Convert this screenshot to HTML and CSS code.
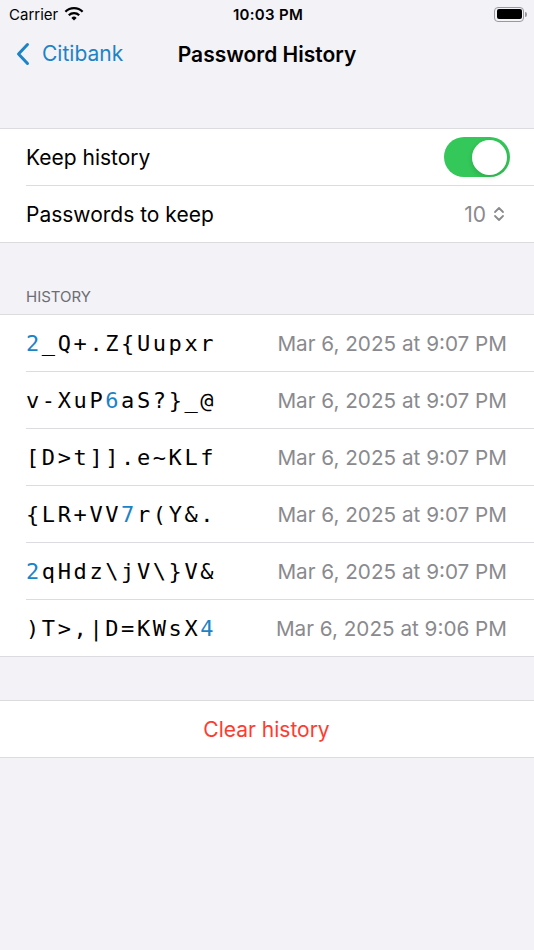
FILE: index.html
```html
<!DOCTYPE html>
<html lang="en">
<head>
  <meta charset="UTF-8" />
  <meta name="viewport" content="width=device-width, initial-scale=1.0"/>
  <title>Password History</title>
  <link rel="stylesheet" href="styles.css">
</head>
<body>

  <div class="status-bar">
    <div class="status-left">
      <span>Carrier</span>
      <svg class="wifi" viewBox="0 0 20 14">
        <path d="M10 13.6 L7.4 10.9 A3.7 3.7 0 0 1 12.6 10.9 Z" />
        <path d="M5.6 9.1 L4 7.4 A8.5 8.5 0 0 1 16 7.4 L14.4 9.1 A6.2 6.2 0 0 0 5.6 9.1 Z" />
        <path d="M2.2 5.6 L0.6 3.9 A13.3 13.3 0 0 1 19.4 3.9 L17.8 5.6 A11 11 0 0 0 2.2 5.6 Z" />
      </svg>
    </div>
    <div class="status-time">10:03 PM</div>
    <div class="status-right">
      <div class="battery"><div class="battery-fill"></div></div>
      <div class="battery-nub"></div>
    </div>
  </div>

  <header class="nav-bar">
    <a href="#" class="nav-back">
      <svg viewBox="0 0 14 24">
        <polyline points="11.5 2.5 2.5 12 11.5 21.5" />
      </svg>
      Citibank
    </a>
    <h1 class="nav-title">Password History</h1>
  </header>

  <section class="group group-settings">
    <div class="row">
      <span class="row-label">Keep history</span>
      <div class="toggle"><div class="toggle-knob"></div></div>
    </div>
    <div class="row">
      <span class="row-label">Passwords to keep</span>
      <span class="stepper">
        10
        <svg viewBox="0 0 12 16">
          <polyline points="2 6 6 2 10 6" />
          <polyline points="2 10 6 14 10 10" />
        </svg>
      </span>
    </div>
  </section>

  <div class="group-header">History</div>
  <section class="group">
    <div class="row">
      <span class="pw"><span class="digit">2</span>_Q+.Z{Uupxr</span>
      <span class="date">Mar 6, 2025 at 9:07 PM</span>
    </div>
    <div class="row">
      <span class="pw">v-XuP<span class="digit">6</span>aS?}_@</span>
      <span class="date">Mar 6, 2025 at 9:07 PM</span>
    </div>
    <div class="row">
      <span class="pw">[D&gt;t]].e~KLf</span>
      <span class="date">Mar 6, 2025 at 9:07 PM</span>
    </div>
    <div class="row">
      <span class="pw">{LR+VV<span class="digit">7</span>r(Y&amp;.</span>
      <span class="date">Mar 6, 2025 at 9:07 PM</span>
    </div>
    <div class="row">
      <span class="pw"><span class="digit">2</span>qHdz\jV\}V&amp;</span>
      <span class="date">Mar 6, 2025 at 9:07 PM</span>
    </div>
    <div class="row">
      <span class="pw">)T&gt;,|D=KWsX<span class="digit">4</span></span>
      <span class="date">Mar 6, 2025 at 9:06 PM</span>
    </div>
  </section>

  <section class="group group-clear">
    <div class="row row-center">
      <a href="#" class="btn-clear">Clear history</a>
    </div>
  </section>

</body>
</html>
```

FILE: styles.css
```css
:root {
  --blue: #1c83c6;
  --grey: #8a8a8e;
  --line: #dcdce0;
  --bg: #f2f2f7;
}

body {
  font-family: Inter, 'Noto Sans', Arial, sans-serif;
  background: var(--bg);
  margin: 0;
  color: #000;
  min-height: 100vh;
}

.status-bar {
  height: 28px;
  display: flex;
  align-items: center;
  justify-content: space-between;
  padding: 0 7px 0 9px;
  font-size: 15px;
}

.status-left {
  display: flex;
  align-items: center;
  gap: 6px;
  width: 120px;
}

.wifi {
  width: 20px;
  height: 14px;
  fill: #000;
}

.status-time {
  font-weight: 600;
  letter-spacing: 0.3px;
}

.status-right {
  display: flex;
  align-items: center;
  justify-content: flex-end;
  width: 120px;
}

.battery {
  width: 25px;
  height: 10px;
  border: 1.5px solid #9a9a9e;
  border-radius: 4px;
  padding: 1.5px;
}

.battery-fill {
  width: 100%;
  height: 100%;
  background: #000;
  border-radius: 2px;
}

.battery-nub {
  width: 2px;
  height: 5px;
  margin-left: 1px;
  background: #9a9a9e;
  border-radius: 0 2px 2px 0;
}

.nav-bar {
  height: 52px;
  display: flex;
  align-items: center;
  justify-content: center;
  position: relative;
  margin-bottom: 48px;
}

.nav-back {
  position: absolute;
  left: 16px;
  top: 13px;
  display: flex;
  align-items: center;
  gap: 12px;
  color: var(--blue);
  text-decoration: none;
  font-size: 21px;
}

.nav-back svg {
  width: 14px;
  height: 24px;
  fill: none;
  stroke: var(--blue);
  stroke-width: 3;
  stroke-linecap: round;
  stroke-linejoin: round;
}

.nav-title {
  margin: 0;
  font-size: 21px;
  font-weight: 600;
}

.group {
  background: #fff;
  border-top: 1px solid var(--line);
  border-bottom: 1px solid var(--line);
}

.group-settings {
  margin-bottom: 44px;
}

.group-header {
  padding: 0 26px 8px;
  font-size: 15px;
  color: #6d6d72;
  text-transform: uppercase;
}

.group-clear {
  margin-top: 43px;
}

.row {
  height: 56px;
  display: flex;
  align-items: center;
  justify-content: space-between;
  padding: 0 27px 0 26px;
  position: relative;
}

.row + .row::before {
  content: "";
  position: absolute;
  top: -1px;
  left: 26px;
  right: 0;
  border-top: 1px solid var(--line);
}

.row + .row {
  margin-top: 1px;
}

.row-label {
  font-size: 21px;
}

.toggle {
  width: 66px;
  height: 40px;
  border-radius: 20px;
  background: #34c759;
  margin-right: -3px;
  display: flex;
  align-items: center;
  justify-content: flex-end;
  padding: 0 3px;
  box-sizing: border-box;
}

.toggle-knob {
  width: 35px;
  height: 35px;
  border-radius: 50%;
  background: #fff;
  box-shadow: 0 2px 5px rgba(0, 0, 0, 0.15);
}

.stepper {
  display: flex;
  align-items: center;
  gap: 7px;
  color: var(--grey);
  font-size: 21px;
  margin-right: 2px;
}

.stepper svg {
  width: 12px;
  height: 16px;
  fill: none;
  stroke: var(--grey);
  stroke-width: 1.8;
  stroke-linecap: round;
  stroke-linejoin: round;
}

.pw {
  font-family: 'DejaVu Sans Mono', 'Liberation Mono', monospace;
  font-size: 22px;
  letter-spacing: 2.6px;
}

.digit {
  color: var(--blue);
}

.date {
  color: var(--grey);
  font-size: 20.7px;
}

.row-center {
  justify-content: center;
}

.btn-clear {
  color: #ff3b30;
  text-decoration: none;
  font-size: 21px;
}
```
